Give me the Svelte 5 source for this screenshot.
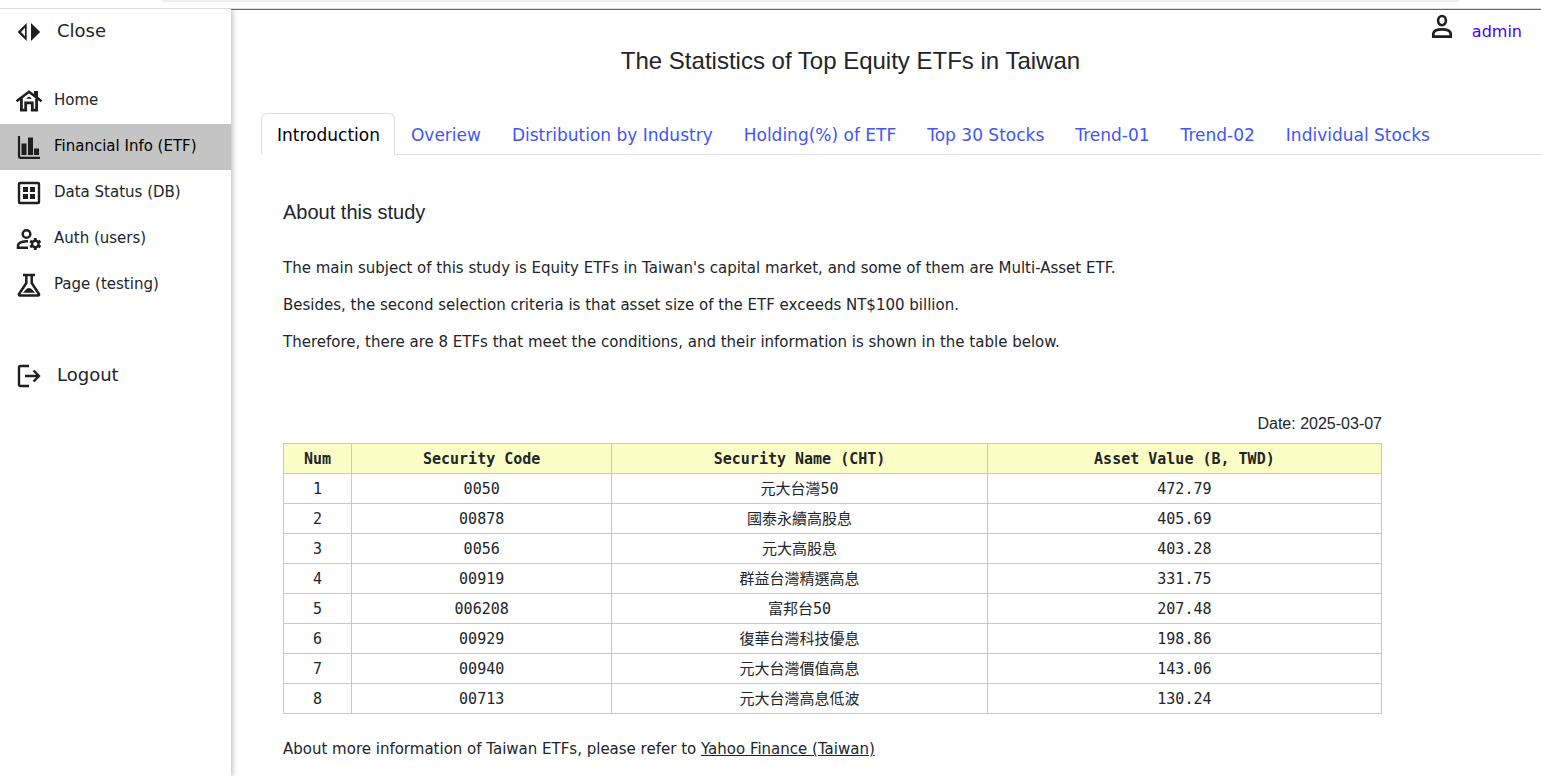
<script>
  const nav = [
    { label: 'Home', icon: 'home' },
    { label: 'Financial Info (ETF)', icon: 'chart', active: true },
    { label: 'Data Status (DB)', icon: 'grid' },
    { label: 'Auth (users)', icon: 'auth' },
    { label: 'Page (testing)', icon: 'flask' }
  ];
  const tabs = [
    'Introduction',
    'Overiew',
    'Distribution by Industry',
    'Holding(%) of ETF',
    'Top 30 Stocks',
    'Trend-01',
    'Trend-02',
    'Individual Stocks'
  ];
  const rows = [
    ['0050', '元大台灣50', '472.79'],
    ['00878', '國泰永續高股息', '405.69'],
    ['0056', '元大高股息', '403.28'],
    ['00919', '群益台灣精選高息', '331.75'],
    ['006208', '富邦台50', '207.48'],
    ['00929', '復華台灣科技優息', '198.86'],
    ['00940', '元大台灣價值高息', '143.06'],
    ['00713', '元大台灣高息低波', '130.24']
  ];
  let current = $state('Introduction');
</script>

{#snippet icon(name)}
  <svg class="icon" viewBox="0 0 28 28" aria-hidden="true">
    {#if name === 'close'}
      <path d="M3.600 14 12.700 5V23ZM7 14l4 4.200v-8.400Z" fill="currentColor" fill-rule="evenodd" />
      <path d="M17 5 26.200 14 17 23Z" fill="currentColor" />
    {:else if name === 'home'}
      <path d="M2.500 14.300 15 4.800l12.500 9.500" fill="none" stroke="currentColor" stroke-width="2.600" />
      <path d="M20 4h4v8l-4-3Z" fill="currentColor" />
      <path d="M7.400 11.500v11.700h4.300v-7.400h6.600v7.400h4.300V11.500" fill="none" stroke="currentColor" stroke-width="2.800" />
      <path d="M12.200 11.800q2.800-4 5.600 0Z" fill="currentColor" />
    {:else if name === 'chart'}
      <path d="M5 3v20q0 1.800 1.800 1.800H26" fill="none" stroke="currentColor" stroke-width="2.200" />
      <path d="M7.500 10.500h5V22h-5zM14 4.500h5V22h-5zM20 15.500h5V22h-5z" fill="currentColor" />
    {:else if name === 'grid'}
      <rect x="5" y="4" width="20" height="20" rx="1" fill="none" stroke="currentColor" stroke-width="2.400" />
      <path d="M9 8h5v5H9zM16 8h5v5h-5zM9 15h5v5H9zM16 15h5v5h-5z" fill="currentColor" />
    {:else if name === 'auth'}
      <g fill="none" stroke="currentColor">
        <circle cx="12.500" cy="9" r="3.800" stroke-width="2.500" />
        <path d="M14 22.700H4v-2.200q0-3.700 8.500-4.300h1.500" stroke-width="2.500" />
        <circle cx="21.300" cy="19" r="3.300" stroke-width="2.400" />
        <path d="M21.300 13v3M21.300 22v3M16.100 16l2.600 1.500M23.900 20.500l2.600 1.500M16.100 22l2.600-1.500M23.900 17.500l2.600-1.500" stroke-width="2.800" />
      </g>
    {:else if name === 'flask'}
      <path d="M9 4h12M12.300 4v8L5 23q-.5 1.500 1 1.500h18q1.500 0 1-1.500l-7.300-11V4" fill="none" stroke="currentColor" stroke-width="2.500" />
      <path d="m9 21.800 3.500-3.800q2.500-2 5 0l3.500 3.800Z" fill="currentColor" />
    {:else if name === 'logout'}
      <path d="M15 4H6.500Q5 4 5 5.500v17Q5 24 6.500 24H15M11 14h14M19.500 8.500 25 14l-5.500 5.500" fill="none" stroke="currentColor" stroke-width="2.400" />
    {:else if name === 'person'}
      <ellipse cx="14" cy="7.600" rx="3.900" ry="4.600" fill="none" stroke="currentColor" stroke-width="2.600" />
      <path d="M5.300 23.600v-3.200Q6 16.300 14 16.300t8.700 4.100v3.200Z" fill="none" stroke="currentColor" stroke-width="2.700" />
    {/if}
  </svg>
{/snippet}

<div class="page">
  <div class="strip"><div class="field"></div></div>
  <div class="layout">
    <aside>
      <button class="side large">{@render icon('close')}<span>Close</span></button>
      <nav aria-label="Main">
        {#each nav as item}
          <a class="side" class:active={item.active} href="#top">{@render icon(item.icon)}<span>{item.label}</span></a>
        {/each}
      </nav>
      <button class="side large">{@render icon('logout')}<span>Logout</span></button>
    </aside>
    <main>
      <header>
        <h1>The Statistics of Top Equity ETFs in Taiwan</h1>
        <div class="user">{@render icon('person')}<a href="#admin">admin</a></div>
      </header>
      <div class="tabs" role="tablist">
        {#each tabs as tab}
          <button role="tab" aria-selected={current === tab} onclick={() => (current = tab)}>{tab}</button>
        {/each}
      </div>
      <section>
        <h2>About this study</h2>
        <p>The main subject of this study is Equity ETFs in Taiwan's capital market, and some of them are Multi-Asset ETF.</p>
        <p>Besides, the second selection criteria is that asset size of the ETF exceeds NT$100 billion.</p>
        <p>Therefore, there are 8 ETFs that meet the conditions, and their information is shown in the table below.</p>
        <div class="date">Date: 2025-03-07</div>
        <table>
          <colgroup><col class="num" /><col class="code" /><col class="name" /><col class="value" /></colgroup>
          <thead>
            <tr><th>Num</th><th>Security Code</th><th>Security Name (CHT)</th><th>Asset Value (B, TWD)</th></tr>
          </thead>
          <tbody>
            {#each rows as row, i}
              <tr><td>{i + 1}</td><td>{row[0]}</td><td lang="zh-TW">{row[1]}</td><td>{row[2]}</td></tr>
            {/each}
          </tbody>
        </table>
        <p class="more">About more information of Taiwan ETFs, please refer to <a href="#yahoo">Yahoo Finance (Taiwan)</a></p>
      </section>
    </main>
  </div>
</div>

<style>
  :global(body) {
    margin: 0;
    background: #fff;
  }
  .page {
    display: flex;
    flex-direction: column;
    min-height: 100vh;
    color: #212529;
    font-family: Verdana, 'DejaVu Sans', sans-serif;
    font-size: 15px;
  }
  .strip {
    height: 8px;
    padding: 0 82px 0 162px;
    border-bottom: 1px solid #dcdcdc;
  }
  .field {
    height: 2px;
    border-radius: 0 0 8px 8px;
    background: #e9eef9;
  }
  .layout {
    display: grid;
    grid-template-columns: 231px minmax(0, 1fr);
    flex: 1;
  }
  aside {
    position: relative;
    box-shadow: 1px 0 6px rgba(0, 0, 0, 0.3);
    clip-path: inset(0 -10px 0 0);
  }
  nav {
    padding: 23px 0 45px;
  }
  .side {
    display: flex;
    align-items: center;
    gap: 12px;
    box-sizing: border-box;
    width: 100%;
    height: 46px;
    padding: 0 14px 2px;
    border: 0;
    background: none;
    color: #212529;
    font: 15px Verdana, 'DejaVu Sans', sans-serif;
    text-decoration: none;
    cursor: pointer;
  }
  .side.large {
    gap: 15px;
    padding-bottom: 4px;
    font-size: 18px;
  }
  .side.active {
    background: #c4c4c4;
    color: #000;
  }
  .icon {
    flex: none;
    width: 28px;
    height: 28px;
    color: #1f1f1f;
  }
  .side .icon {
    margin-top: 2px;
  }
  .large .icon {
    margin-top: 4px;
  }
  main {
    border-top: 1px solid #3d7d6e;
  }
  header {
    display: grid;
    grid-template-columns: 1fr auto 1fr;
    height: 103px;
    padding: 0 19px 0 0;
  }
  h1 {
    grid-column: 2;
    margin: 36px 0 0;
    padding-right: 52px;
    font: 24px/30px 'Liberation Sans', Arial, sans-serif;
  }
  .user {
    display: flex;
    justify-content: flex-end;
    gap: 16px;
    padding-top: 3px;
    line-height: 38px;
    font-size: 16px;
  }
  .user a {
    color: #4400ff;
    text-decoration: none;
  }
  .tabs {
    display: flex;
    margin-left: 30px;
    border-bottom: 1px solid #dee2e6;
  }
  .tabs button {
    height: 42px;
    margin-bottom: -1px;
    padding: 2px 14px 0 15px;
    border: 1px solid transparent;
    border-radius: 6px 6px 0 0;
    background: none;
    color: #4355f5;
    font: 17px Verdana, 'DejaVu Sans', sans-serif;
    white-space: nowrap;
    cursor: pointer;
  }
  .tabs button[aria-selected='true'] {
    border-color: #d9dce4;
    border-bottom-color: #fff;
    background: #fff;
    color: #000;
  }
  section {
    padding: 45px 159px 0 52px;
  }
  h2 {
    margin: 0 0 33px;
    font: 20px/24px 'Liberation Sans', Arial, sans-serif;
  }
  p {
    margin: 0 0 14px;
    line-height: 23px;
  }
  .date {
    margin: 58px 0 7px;
    font: 16px/24px 'Liberation Sans', Arial, sans-serif;
    text-align: right;
  }
  table {
    width: 100%;
    border-collapse: collapse;
    table-layout: fixed;
    font: 15px/20px 'DejaVu Sans Mono', 'Noto Sans CJK TC', monospace;
  }
  .num {
    width: 6.200%;
  }
  .code {
    width: 23.700%;
  }
  .name {
    width: 34.200%;
  }
  th,
  td {
    height: 29px;
    padding: 0;
    border: 1px solid #c8c8c8;
    text-align: center;
  }
  th {
    background: #fcffc5;
  }
  .more {
    margin: 24px 0 16px;
  }
  .more a {
    color: inherit;
  }
</style>
